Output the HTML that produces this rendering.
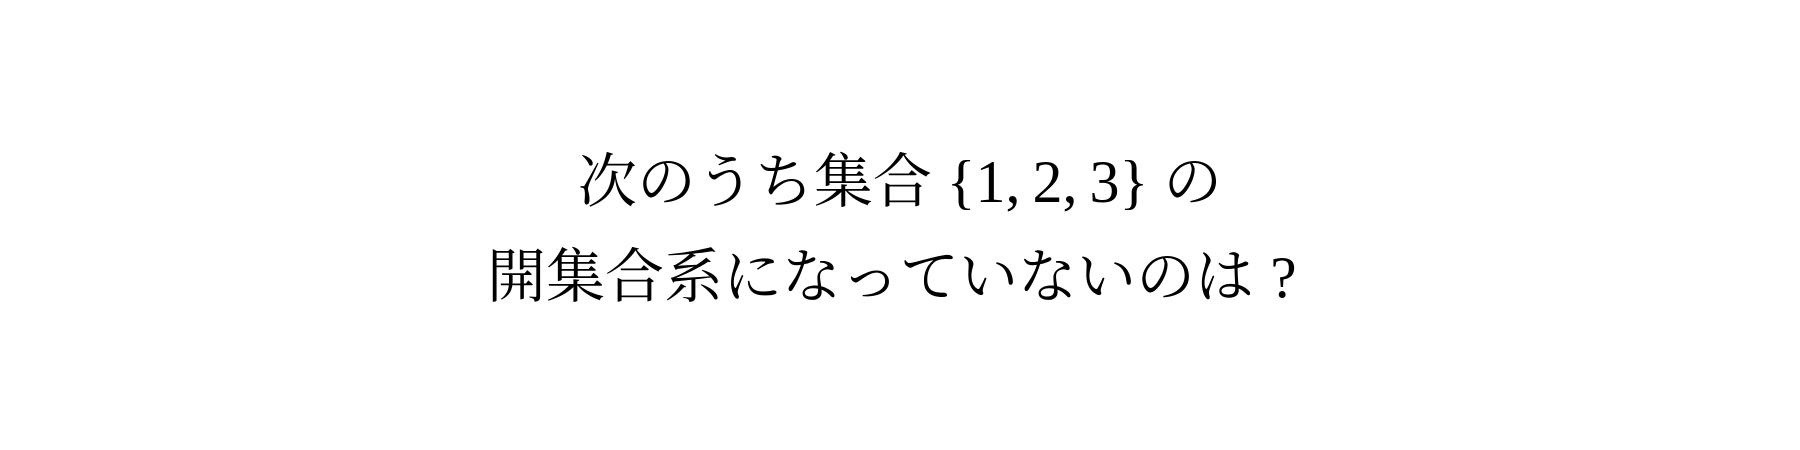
<!DOCTYPE html>
<html><head><meta charset="utf-8"><style>
html,body{margin:0;padding:0;background:#fff;width:1800px;height:450px;overflow:hidden}
.l{position:absolute;left:0;width:1800px;text-align:center;font-family:"Liberation Serif","Noto Serif CJK SC",serif;font-size:59px;color:#000;line-height:62px;white-space:nowrap}
.m{font-family:"Liberation Serif",serif;font-size:60px}
.q{display:inline-block;width:1em;text-align:center;font-family:"Liberation Serif",serif}
</style></head><body>
<div class="l" style="top:151px">次のうち集合 <span class="m">{1,&thinsp;2,&thinsp;3}</span> の</div>
<div class="l" style="top:246px">開集合系になっていないのは<span class="q">?</span></div>
</body></html>
